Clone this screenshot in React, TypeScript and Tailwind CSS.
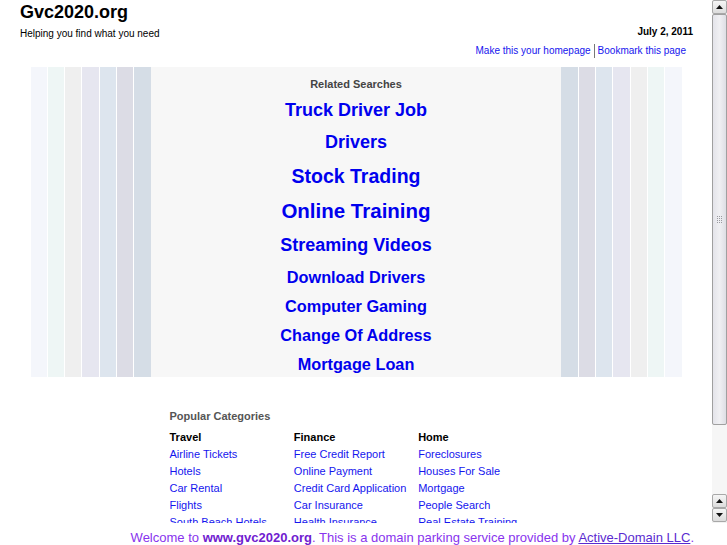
import React from "react";

const leftStripes = ["#f4f6fb", "#eef6f5", "#efefef", "#e6e6f0", "#dde5ee", "#dcdce5", "#d5dde6"];
const rightStripes = [...leftStripes].reverse();

const related: { t: string; cls: string }[] = [
  { t: "Truck Driver Job", cls: "text-[18px] leading-[26px] mt-[6px]" },
  { t: "Drivers", cls: "text-[18px] leading-[26px] mt-[6px]" },
  { t: "Stock Trading", cls: "text-[19.5px] leading-[26px] mt-[8px]" },
  { t: "Online Training", cls: "text-[20.5px] leading-[26px] mt-[9px]" },
  { t: "Streaming Videos", cls: "text-[18px] leading-[26px] mt-[8px]" },
  { t: "Download Drivers", cls: "text-[16.3px] leading-[26px] mt-[6px]" },
  { t: "Computer Gaming", cls: "text-[16.3px] leading-[26px] mt-[3px]" },
  { t: "Change Of Address", cls: "text-[16.3px] leading-[26px] mt-[3px]" },
  { t: "Mortgage Loan", cls: "text-[16.3px] leading-[26px] mt-[3px]" },
];

const cats = [
  { h: "Travel", items: ["Airline Tickets", "Hotels", "Car Rental", "Flights", "South Beach Hotels"] },
  { h: "Finance", items: ["Free Credit Report", "Online Payment", "Credit Card Application", "Car Insurance", "Health Insurance"] },
  { h: "Home", items: ["Foreclosures", "Houses For Sale", "Mortgage", "People Search", "Real Estate Training"] },
];

function Stripes({ colors }: { colors: string[] }) {
  return (
    <div className="flex gap-[1px] bg-white">
      {colors.map((c, i) => (
        <div key={i} className="w-[16.3px]" style={{ backgroundColor: c }} />
      ))}
    </div>
  );
}

function ArrowBtn({ up }: { up: boolean }) {
  return (
    <div className="h-[14px] w-[15px] border border-[#a8a8a8] rounded-[2px] bg-gradient-to-b from-[#f6f6f6] to-[#dcdcdc] flex items-center justify-center">
      <svg width="7" height="4" viewBox="0 0 7 4">
        {up ? <polygon points="0,4 7,4 3.5,0" fill="#111" /> : <polygon points="0,0 7,0 3.5,4" fill="#111" />}
      </svg>
    </div>
  );
}

function Scrollbar() {
  return (
    <div className="w-[15px] h-full flex flex-col bg-[#f2f2f2]">
      <ArrowBtn up />
      <div className="h-[411px] border border-[#a0a0a0] rounded-[2px] bg-gradient-to-r from-[#e4e4ea] via-[#f0f0f3] to-[#dedee4] flex items-center justify-center">
        <div className="grid grid-cols-3 gap-[1px]">
          {Array.from({ length: 12 }).map((_, i) => (
            <div key={i} className="w-[1px] h-[1px] bg-[#9a9aa0]" />
          ))}
        </div>
      </div>
      <div className="flex-1 bg-[#f6f6f6]" />
      <ArrowBtn up />
      <ArrowBtn up={false} />
      <div className="h-[1px]" />
    </div>
  );
}

export default function App() {
  return (
    <div className="w-[727px] h-[545px] overflow-hidden bg-white flex flex-col" style={{ fontFamily: '"Liberation Sans", Arial, sans-serif' }}>
      <div className="h-[523px] flex flex-row overflow-hidden">
        <div className="flex-1 overflow-hidden flex flex-col">
          {/* header */}
          <div className="flex justify-between pl-[20px] pr-[19px] pt-[2px]">
            <div className="flex flex-col">
              <div className="text-[18px] leading-[20px] font-bold text-black">Gvc2020.org</div>
              <div className="text-[10px] leading-[12px] mt-[6px] text-black">Helping you find what you need</div>
            </div>
            <div className="flex flex-col items-end">
              <div className="text-[10px] leading-[12px] font-bold text-black mt-[24px]">July 2, 2011</div>
              <div className="flex items-center mt-[6px] mr-[7px] text-[10px] leading-[12px] text-[#1515ee]">
                <span>Make this your homepage</span>
                <span className="mx-[3px] w-[1px] h-[14px] bg-[#777]" />
                <span>Bookmark this page</span>
              </div>
            </div>
          </div>

          {/* related searches box */}
          <div className="mx-auto w-[651px] h-[315px] mt-[9px] flex flex-row">
            <Stripes colors={leftStripes} />
            <div className="flex-1 bg-[#f7f7f7] flex flex-col items-center pt-[10px]">
              <div className="text-[11px] leading-[14px] font-bold text-[#444]">Related Searches</div>
              {related.map((r) => (
                <a key={r.t} className={"font-bold text-[#0000ee] " + r.cls}>
                  {r.t}
                </a>
              ))}
            </div>
            <Stripes colors={rightStripes} />
          </div>

          {/* popular categories */}
          <div className="mx-auto w-[373px] mt-[32px]">
            <div className="text-[11px] leading-[14px] font-bold text-[#555]">Popular Categories</div>
            <div className="grid grid-cols-3 mt-[6px]">
              {cats.map((c) => (
                <div key={c.h} className="flex flex-col">
                  <div className="text-[11px] leading-[17px] font-bold text-black">{c.h}</div>
                  {c.items.map((it) => (
                    <a key={it} className="text-[11px] leading-[17px] text-[#1515ee] whitespace-nowrap">
                      {it}
                    </a>
                  ))}
                </div>
              ))}
            </div>
          </div>
        </div>
        <Scrollbar />
      </div>
      <div className="h-[22px] flex items-end justify-end pr-[33px] bg-white">
        <div className="text-[13px] leading-[14px] text-[#8833ee] whitespace-nowrap">
          Welcome to <b className="text-[#7020d0]">www.gvc2020.org</b>. This is a domain parking service provided by{" "}
          <a className="underline text-[#5a2ad0]">Active-Domain LLC</a>.
        </div>
      </div>
    </div>
  );
}
